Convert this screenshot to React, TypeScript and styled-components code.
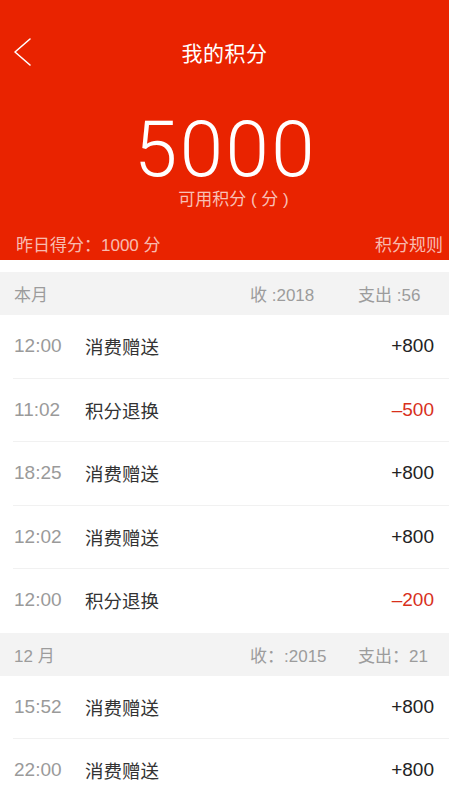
import React from 'react';
import styled, { createGlobalStyle } from 'styled-components';

interface Record {
  time: string;
  title: string;
  amount: number;
}

interface MonthGroup {
  month: string;
  income: string;
  expense: string;
  records: Record[];
}

const groups: MonthGroup[] = [
  {
    month: '本月',
    income: '收 :2018',
    expense: '支出 :56',
    records: [
      { time: '12:00', title: '消费赠送', amount: 800 },
      { time: '11:02', title: '积分退换', amount: -500 },
      { time: '18:25', title: '消费赠送', amount: 800 },
      { time: '12:02', title: '消费赠送', amount: 800 },
      { time: '12:00', title: '积分退换', amount: -200 },
    ],
  },
  {
    month: '12 月',
    income: '收：:2015',
    expense: '支出：21',
    records: [
      { time: '15:52', title: '消费赠送', amount: 800 },
      { time: '22:00', title: '消费赠送', amount: 800 },
    ],
  },
];

const formatAmount = (n: number) => (n >= 0 ? `+${n}` : `–${Math.abs(n)}`);

const App: React.FC = () => {
  return (
    <>
      <GlobalStyle />
      <Page>
        <Header>
          <NavBar>
            <BackButton aria-label="返回">
              <svg width="20" height="30" viewBox="0 0 20 30">
                <polyline
                  points="17,2 2,15 17,28"
                  fill="none"
                  stroke="#ffffff"
                  strokeWidth="1.6"
                  strokeLinecap="round"
                  strokeLinejoin="round"
                />
              </svg>
            </BackButton>
            <NavTitle>我的积分</NavTitle>
          </NavBar>

          <Balance>5000</Balance>
          <BalanceLabel>可用积分 ( 分 )</BalanceLabel>

          <HeaderFooter>
            <span>昨日得分：1000 分</span>
            <span>积分规则</span>
          </HeaderFooter>
        </Header>

        <List>
          {groups.map((g) => (
            <Group key={g.month}>
              <MonthBar>
                <MonthName>{g.month}</MonthName>
                <Stats>
                  <StatCell $width={108}>{g.income}</StatCell>
                  <StatCell $width={91}>{g.expense}</StatCell>
                </Stats>
              </MonthBar>
              {g.records.map((r, i) => (
                <Row key={i} $last={i === g.records.length - 1}>
                  <Time>{r.time}</Time>
                  <Title>{r.title}</Title>
                  <Amount $negative={r.amount < 0}>{formatAmount(r.amount)}</Amount>
                </Row>
              ))}
            </Group>
          ))}
        </List>
      </Page>
    </>
  );
};

export default App;

// ===== Styles =====

const GlobalStyle = createGlobalStyle`
  html, body {
    margin: 0;
    padding: 0;
    background: #ffffff;
  }
  body {
    font-family: 'Liberation Sans', 'Noto Sans CJK SC', sans-serif;
    -webkit-font-smoothing: antialiased;
  }
  * {
    box-sizing: border-box;
  }
`;

const Page = styled.div`
  width: 449px;
  min-height: 800px;
  overflow: hidden;
  background: #ffffff;
`;

const Header = styled.header`
  height: 260px;
  background: #e92300;
  display: flex;
  flex-direction: column;
  align-items: center;
  padding-top: 22px;
  color: #ffffff;
`;

const NavBar = styled.div`
  position: relative;
  width: 100%;
  height: 60px;
  display: flex;
  align-items: center;
  justify-content: center;
`;

const BackButton = styled.div`
  position: absolute;
  left: 13px;
  top: 15px;
  width: 20px;
  height: 30px;
  display: flex;
`;

const NavTitle = styled.h1`
  margin: 0;
  font-size: 21px;
  font-weight: 400;
  letter-spacing: 0.5px;
`;

const Balance = styled.div`
  margin-top: 32px;
  padding-left: 2px;
  font-family: Roboto, 'Liberation Sans', sans-serif;
  font-weight: 300;
  font-size: 78px;
  letter-spacing: 2.5px;
  line-height: 72px;
  height: 72px;
`;

const BalanceLabel = styled.div`
  margin-top: 4px;
  margin-left: 18px;
  font-size: 17px;
  line-height: 20px;
  height: 20px;
  color: rgba(255, 255, 255, 0.72);
`;

const HeaderFooter = styled.div`
  margin-top: auto;
  width: 100%;
  height: 34px;
  padding: 0 6px 0 16px;
  display: flex;
  align-items: center;
  justify-content: space-between;
  font-size: 17px;
  color: rgba(255, 255, 255, 0.7);
`;

const List = styled.div`
  padding-top: 12px;
`;

const Group = styled.section``;

const MonthBar = styled.div`
  height: 43px;
  background: #f3f3f3;
  display: flex;
  align-items: center;
  padding-left: 14px;
  font-size: 17px;
  color: #9c9c9c;
`;

const MonthName = styled.span`
  flex: 1;
`;

const Stats = styled.div`
  display: flex;
`;

const StatCell = styled.span<{ $width: number }>`
  width: ${(p) => p.$width}px;
`;

const Row = styled.div<{ $last: boolean }>`
  height: 63.5px;
  margin-left: 13px;
  display: flex;
  align-items: center;
  padding-right: 15px;
  border-bottom: 1px solid ${(p) => (p.$last ? 'transparent' : '#f1f1f1')};
  font-size: 19px;
`;

const Time = styled.span`
  width: 72px;
  padding-left: 1px;
  color: #9a9a9a;
`;

const Title = styled.span`
  flex: 1;
  font-size: 18.5px;
  color: #333333;
`;

const Amount = styled.span<{ $negative: boolean }>`
  color: ${(p) => (p.$negative ? '#d8301c' : '#222222')};
`;
